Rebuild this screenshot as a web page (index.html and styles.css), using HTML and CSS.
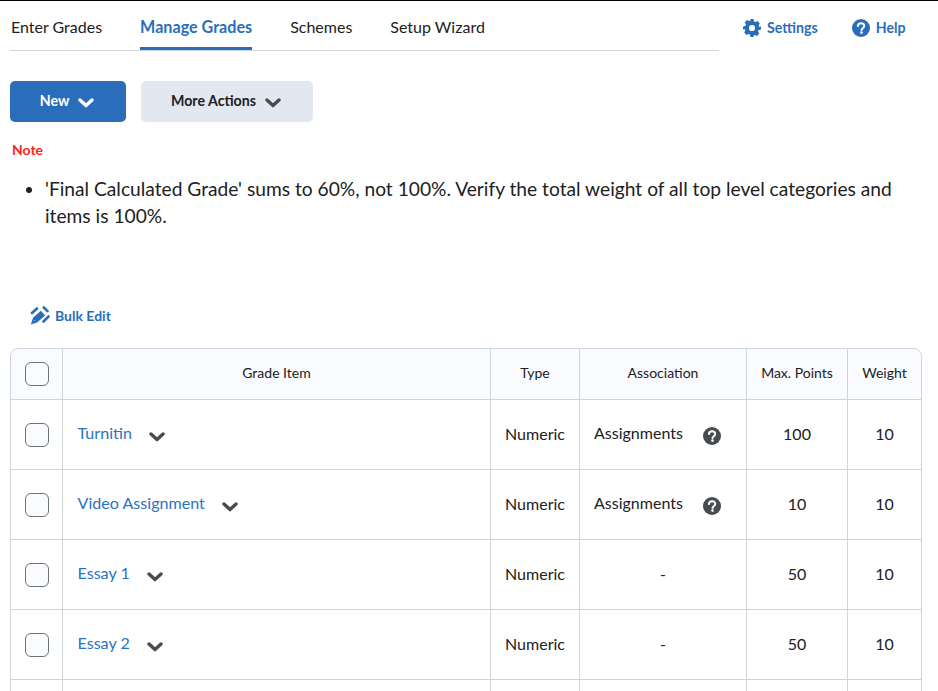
FILE: index.html
```html
<!DOCTYPE html>
<html lang="en">
<head>
<meta charset="utf-8">
<title>Manage Grades</title>
<link rel="stylesheet" href="styles.css">
</head>
<body>
<svg class="defs" width="0" height="0" aria-hidden="true">
  <defs>
    <symbol id="chev" viewBox="0 0 16 10"><path d="M2 2l6 5.600L14 2" fill="none" stroke="currentColor" stroke-width="3.400" stroke-linecap="round" stroke-linejoin="round"/></symbol>
    <symbol id="help" viewBox="0 0 18 18"><circle cx="9" cy="9" r="9" fill="currentColor"/><path d="M5.900 7.100C6 5.300 7.300 4.300 9.100 4.300c1.800 0 3.100 1.100 3.100 2.600 0 1.200-.7 1.800-1.600 2.400-.8.5-1.100.9-1.100 1.700" fill="none" stroke="#fff" stroke-width="2" stroke-linecap="round"/><circle cx="9.500" cy="13.600" r="1.300" fill="#fff"/></symbol>
  </defs>
</svg>
<header class="top">
  <nav class="tabs">
    <a class="tab">Enter Grades</a>
    <a class="tab active">Manage Grades</a>
    <a class="tab">Schemes</a>
    <a class="tab">Setup Wizard</a>
  </nav>
  <div class="links">
    <a class="link"><svg class="ico" viewBox="0 0 18 18"><path fill="currentColor" fill-rule="evenodd" d="M7.400 0h3.200l.4 2.400c.5.2 1 .4 1.400.7l2.200-1 2.200 2.300-1.200 2c.3.5.5 1 .6 1.500L18 7.400v3.200l-2.400.5c-.1.5-.3 1-.6 1.500l1.200 2-2.200 2.300-2.200-1c-.4.300-.9.500-1.400.700L10.600 18H7.400L7 15.600c-.5-.2-1-.4-1.400-.7l-2.200 1-2.200-2.300 1.200-2c-.3-.5-.5-1-.6-1.500L0 10.600V7.400l2.400-.5c.1-.5.300-1 .6-1.500l-1.200-2L4 1.100l2.200 1c.4-.3.900-.5 1.400-.7zM9 5.900a3.100 3.100 0 1 0 0 6.200 3.100 3.100 0 0 0 0-6.200z"/></svg>Settings</a>
    <a class="link"><svg class="ico"><use href="#help"/></svg>Help</a>
  </div>
</header>

<div class="actions">
  <button class="btn primary">New<svg class="btn-chev"><use href="#chev"/></svg></button>
  <button class="btn secondary">More Actions<svg class="btn-chev"><use href="#chev"/></svg></button>
</div>

<p class="note">Note</p>
<ul class="warn">
  <li>'Final Calculated Grade' sums to 60%, not 100%. Verify the total weight of all top level categories and items is 100%.</li>
</ul>

<a class="bulk"><svg class="bulk-ico" viewBox="0 0 20 20"><path fill="none" stroke="currentColor" stroke-width="2.600" stroke-linecap="round" d="M2 8l5-4.500M13.500 16.500l5-5M13.800 2.500l3.700 3.700"/><path fill="currentColor" fill-rule="evenodd" d="M.8 19.500l2.200-6.700 7.900-7 4.200 4.600-8 7.200zM4.800 14.800l-.8 1.300 1.300-.6z"/></svg>Bulk Edit</a>

<table class="grades">
  <colgroup>
    <col class="c-check"><col class="c-item"><col class="c-type"><col class="c-assoc"><col class="c-max"><col class="c-weight">
  </colgroup>
  <thead>
    <tr>
      <th><span class="box"></span></th>
      <th>Grade Item</th>
      <th>Type</th>
      <th>Association</th>
      <th>Max. Points</th>
      <th>Weight</th>
    </tr>
  </thead>
  <tbody>
    <tr>
      <td><span class="box"></span></td>
      <td class="item"><a class="name">Turnitin</a><svg class="row-chev"><use href="#chev"/></svg></td>
      <td>Numeric</td>
      <td class="assoc"><span>Assignments</span><svg class="q"><use href="#help"/></svg></td>
      <td>100</td>
      <td>10</td>
    </tr>
    <tr>
      <td><span class="box"></span></td>
      <td class="item"><a class="name">Video Assignment</a><svg class="row-chev"><use href="#chev"/></svg></td>
      <td>Numeric</td>
      <td class="assoc"><span>Assignments</span><svg class="q"><use href="#help"/></svg></td>
      <td>10</td>
      <td>10</td>
    </tr>
    <tr>
      <td><span class="box"></span></td>
      <td class="item"><a class="name">Essay 1</a><svg class="row-chev"><use href="#chev"/></svg></td>
      <td>Numeric</td>
      <td>-</td>
      <td>50</td>
      <td>10</td>
    </tr>
    <tr>
      <td><span class="box"></span></td>
      <td class="item"><a class="name">Essay 2</a><svg class="row-chev"><use href="#chev"/></svg></td>
      <td>Numeric</td>
      <td>-</td>
      <td>50</td>
      <td>10</td>
    </tr>
    <tr class="more">
      <td></td><td></td><td></td><td></td><td></td><td></td>
    </tr>
  </tbody>
</table>
</body>
</html>
```

FILE: styles.css
```css
* { box-sizing: border-box; }
html { overflow: hidden; }
body {
  margin: 0;
  border-top: 1px solid #000;
  background: #fff;
  color: #202122;
  font-family: Lato, "Open Sans", sans-serif;
  font-size: 16px;
}
.defs { position: absolute; }

.top { display: flex; height: 50px; padding-left: 10px; }
.tabs {
  display: flex;
  gap: 38px;
  width: 709px;
  height: 50px;
  padding-left: 1px;
  border-bottom: 1px solid #cdd5dc;
}
.tab {
  height: 49px;
  padding-top: 15px;
  line-height: 21px;
  border-bottom: 3px solid transparent;
}
.tab.active {
  color: #2a6ebb;
  font-size: 16.15px;
  font-weight: 700;
  border-bottom-color: #2a6ebb;
}
.links { display: flex; margin-left: 24px; gap: 34px; }
.link {
  display: flex;
  align-items: center;
  gap: 6px;
  height: 53px;
  color: #2a6ebb;
  font-size: 14.2px;
  font-weight: 700;
}
.ico { width: 18px; height: 18px; }

.actions { display: flex; gap: 15px; margin: 30px 0 0 10px; }
.btn {
  display: flex;
  align-items: center;
  justify-content: center;
  gap: 9px;
  height: 41px;
  padding: 0 2px 2px 0;
  border: 0;
  border-radius: 5px;
  font-family: inherit;
  font-size: 14.2px;
  font-weight: 700;
}
.primary { width: 116px; background: #2a6ebb; color: #fff; }
.secondary { width: 172px; background: #e3e7f0; color: #202122; }
.btn-chev { width: 16px; height: 10px; margin-top: 4px; }
.secondary .btn-chev { color: #494c4e; }

.note {
  margin: 19px 0 0 12px;
  color: #ff2020;
  font-size: 14px;
  font-weight: 700;
  line-height: 17px;
}
.warn {
  margin: 17px 0 0;
  padding: 0 40px 0 45px;
  font-size: 19.2px;
  line-height: 27px;
}

.bulk {
  display: flex;
  align-items: center;
  gap: 5px;
  height: 22px;
  margin: 75px 0 0 30px;
  color: #2a6ebb;
  font-size: 14px;
  font-weight: 700;
}
.bulk-ico { width: 20px; height: 20px; }

.grades {
  width: 912px;
  margin: 22px 0 0 10px;
  table-layout: fixed;
  border-collapse: separate;
  border-spacing: 0;
  border: 1px solid #cdd5dc;
  border-radius: 8px 8px 0 0;
  text-align: center;
}
.c-check { width: 51px; }
.c-item { width: 428px; }
.c-type { width: 89px; }
.c-assoc { width: 167px; }
.c-max { width: 101px; }
.c-weight { width: 74px; }
th, td { padding: 0 0 2px; border-left: 1px solid #cdd5dc; }
th:first-child, td:first-child { border-left: 0; padding-bottom: 0; }
th {
  height: 51px;
  padding-bottom: 4px;
  border-bottom: 1px solid #cdd5dc;
  background: #f9fbff;
  font-size: 14px;
  font-weight: 400;
}
th:first-child { border-top-left-radius: 8px; }
th:last-child { border-top-right-radius: 8px; }
td { height: 70px; border-bottom: 1px solid #cdd5dc; }
.box {
  display: block;
  width: 24px;
  height: 24px;
  margin: 0 auto;
  border: 1px solid #6e7376;
  border-radius: 6px;
  background: #f9fbff;
}
th .box { background: #fff0; }
td.item { text-align: left; padding-left: 14.5px; }
.name { color: #2a73c4; font-size: 16.1px; vertical-align: 2px; }
.row-chev { width: 16px; height: 10px; margin-left: 17.5px; color: #494c4e; vertical-align: -1px; }
td.assoc { text-align: left; padding-left: 14px; }
.assoc span { vertical-align: 1px; }
.q { width: 18px; height: 18px; margin-left: 20px; color: #494c4e; vertical-align: -5px; }
```
